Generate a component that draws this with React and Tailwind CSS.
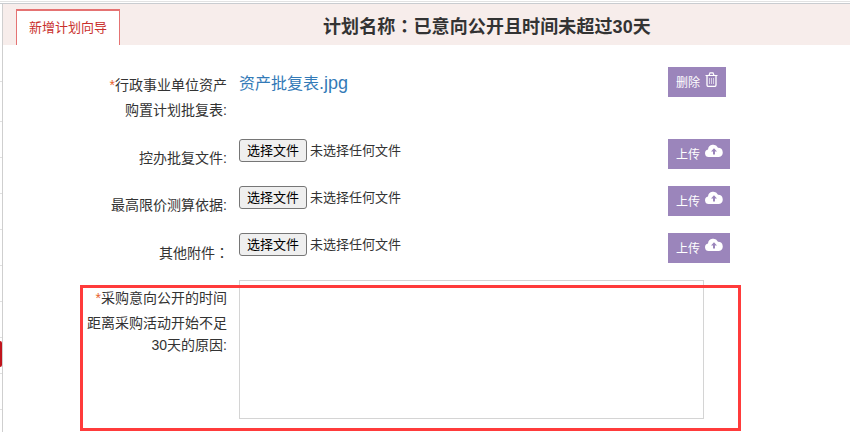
const font = { fontFamily: '"Liberation Sans", "Noto Sans CJK SC", sans-serif' };

const UploadIcon = () => (
  <svg width="18" height="13" viewBox="0 0 18 13" className="-mt-[7px] shrink-0">
    <path d="M4 13a3.8 3.8 0 0 1-1-7.5A5.3 5.3 0 0 1 13 3.7 4.7 4.7 0 0 1 14 13z" fill="#fff" />
    <path d="M9 4.2l3 3.2h-2v3.2H8V7.4H6z" fill="#9b85bb" />
  </svg>
);

const TrashIcon = () => (
  <svg width="13" height="15" viewBox="0 0 13 15" fill="none" stroke="#fff" className="-mt-[6px] shrink-0">
    <path d="M0.5 3.5h12M4 3.5l1-2.6h3l1 2.6" strokeWidth="1.2" />
    <path d="M2 3.5v9.6c0 .8.5 1.3 1.2 1.3h6.6c.7 0 1.2-.5 1.2-1.3V3.5" strokeWidth="1.3" />
    <path d="M4.5 6v6M6.5 6v6M8.5 6v6" strokeWidth="1" strokeOpacity="0.6" />
  </svg>
);

const ActionButton = ({ label, children, className }) => (
  <button type="button" className={`flex h-[30px] items-center gap-[5px] bg-[#9b85bb] pl-2 text-xs text-white ${className}`}>
    <span className="mt-[1px]">{label}</span>
    {children}
  </button>
);

const FileRow = ({ label }) => (
  <div className="flex h-[47px]">
    <div className="w-[224px] pt-[7px] text-right text-sm leading-6 text-[#333]">{label}</div>
    <div className="ml-3 flex h-[23px] w-[429px] items-center text-[13px] text-[#333]">
      <span className="flex h-[23px] w-[68px] items-center justify-center rounded-[3px] border border-[#767676] bg-[#efefef] text-black">选择文件</span>
      <span className="ml-[3px]">未选择任何文件</span>
    </div>
    <ActionButton label="上传" className="w-[62px]">
      <UploadIcon />
    </ActionButton>
  </div>
);

const ticks = [157, 193, 229, 265, 301, 337, 373, 409];

export default function App() {
  return (
    <div className="relative flex h-[432px] w-[850px] flex-col overflow-hidden bg-white" style={font}>
      <div className="h-[4px] shrink-0 border-b border-b-[#c9ccd0] bg-white pt-[1px]">
        <div className="h-px bg-[#e2e2e2]" />
      </div>
      <div className="flex">
        {/* table edge showing at the left of the dialog */}
        <div className="flex w-[2px] shrink-0 flex-col pt-[77px]">
          <div className="h-px bg-[#e0e0e0]" />
          <div className="mt-[39px] h-px bg-[#e0e0e0]" />
          {ticks.map((y) => (
            <div key={y} className="mt-[35px] h-px bg-[#e0e0e0]" />
          ))}
        </div>
        <div className="h-[428px] flex-1 border-l border-[#cfcfcf]">
          <div className="flex h-[41px] bg-[#f7edeb]">
            <div className="ml-[13px] mt-[5px] flex h-9 w-[104px] items-center justify-center border-x border-t-2 border-[#e57373] bg-white text-[13px] text-[#c9302c]">新增计划向导</div>
            <h1 className="ml-[203px] mt-[9px] text-lg font-bold leading-6 tracking-[0.1px] text-[#333]">
              计划名称<span className="font-['Noto_Sans_CJK_TC']">：</span>已意向公开且时间未超过30天
            </h1>
          </div>

          <div className="mt-[19px] flex h-[75px]">
            <div className="w-[224px] pt-[9px] text-right text-sm leading-[25px] text-[#333]">
              <span className="text-[#e8622c]">*</span>行政事业单位资产<br />购置计划批复表:
            </div>
            <div className="ml-3 w-[429px] pt-[5px]">
              <a className="text-base leading-[22px] text-[#337ab7]">资产批复表<span className="text-lg">.jpg</span></a>
            </div>
            <ActionButton label="删除" className="mt-[3px] w-[58px]">
              <TrashIcon />
            </ActionButton>
          </div>

          <FileRow label="控办批复文件:" />
          <FileRow label="最高限价测算依据:" />
          <FileRow label={<span className="-mr-[2px] inline-block">其他附件<span className="font-['Noto_Sans_CJK_TC']">：</span></span>} />

          <div className="flex">
            <div className="w-[224px] pt-[6px] text-right text-sm leading-[25px] text-[#333]">
              <div><span className="text-[#e8622c]">*</span>采购意向公开的时间</div>
              <div>距离采购活动开始不足</div>
              <div className="-mt-[3px]">30天的原因:</div>
            </div>
            <textarea className="ml-3 h-[139px] w-[465px] resize-none border border-[#d4d4d4] bg-white" />
          </div>
        </div>
      </div>

      {/* annotation frame over the form */}
      <div className="pointer-events-none absolute left-[80px] top-[285px] h-[146px] w-[661px] border-[3px] border-[#ff3b3b]" />
      <div className="absolute left-0 top-[341px] h-[26px] w-[2px] rounded-r-sm bg-[#c0141c]" />
    </div>
  );
}
